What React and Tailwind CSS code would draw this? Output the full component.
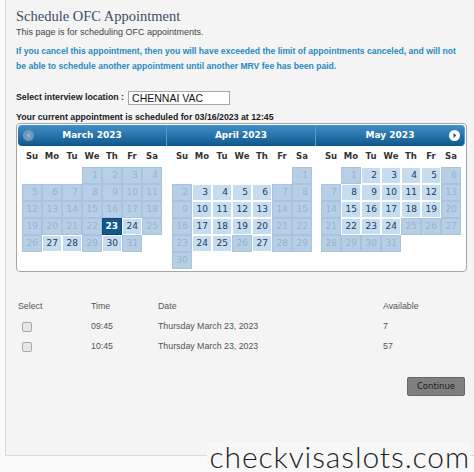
import React from 'react';

const months = [
  { name: 'March 2023', offset: 3, days: 31, open: [24, 27, 28, 30], picked: 23 },
  { name: 'April 2023', offset: 6, days: 30, open: [3, 4, 5, 6, 10, 11, 12, 13, 17, 18, 19, 20, 24, 25, 27] },
  { name: 'May 2023', offset: 1, days: 31, open: [2, 3, 4, 5, 8, 9, 10, 11, 12, 15, 16, 17, 18, 19, 22, 23, 24] },
];

const weekDays = ['Su', 'Mo', 'Tu', 'We', 'Th', 'Fr', 'Sa'];

const slots = [
  { time: '09:45', date: 'Thursday March 23, 2023', available: '7' },
  { time: '10:45', date: 'Thursday March 23, 2023', available: '57' },
];

function NavIcon({ dir }) {
  if (dir === 'prev') {
    return (
      <svg width="11" height="11" viewBox="0 0 11 11">
        <circle cx="5.5" cy="5.5" r="5.5" fill="#6f98bd" />
        <path d="M6.5 3 L3.8 5.5 L6.5 8 Z" fill="#9dbbd5" />
      </svg>
    );
  }
  return (
    <svg width="11" height="11" viewBox="0 0 11 11">
      <circle cx="5.5" cy="5.5" r="5.5" fill="#ffffff" />
      <path d="M4.5 3 L7.2 5.5 L4.5 8 Z" fill="#16527f" />
    </svg>
  );
}

function DayCell({ day, month }) {
  if (!day) return <div />;
  if (day === month.picked) {
    return (
      <div className="border border-[#0b4676] bg-[#12598f] text-white font-bold text-right pr-[3px] leading-[15px]">
        {day}
      </div>
    );
  }
  if (month.open.includes(day)) {
    return (
      <div className="border border-white bg-[#c6dcf1] text-[#223c5a] text-right pr-[3px] leading-[15px]">
        {day}
      </div>
    );
  }
  return (
    <div className="border border-[#a9c3dc] bg-[#b6cfe7] text-[#9ab2c9] text-right pr-[3px] leading-[15px]">
      {day}
    </div>
  );
}

function Month({ month, index }) {
  const cells = [];
  for (let i = 0; i < month.offset; i++) cells.push(null);
  for (let d = 1; d <= month.days; d++) cells.push(d);

  const rounding = index === 0 ? 'rounded-l-[4px]' : index === 2 ? 'rounded-r-[4px]' : '';

  return (
    <div className="w-[149px]">
      <div
        className={`relative h-[21px] flex items-center justify-center bg-gradient-to-b from-[#4190ca] to-[#0c578b] border-r border-[#5b9ccc] text-white text-[9px] font-bold ${rounding}`}
      >
        {index === 0 && (
          <span className="absolute left-[5px] top-[5px] flex">
            <NavIcon dir="prev" />
          </span>
        )}
        {month.name}
        {index === 2 && (
          <span className="absolute right-[4px] top-[5px] flex">
            <NavIcon dir="next" />
          </span>
        )}
      </div>
      <div className={index === 0 ? 'pl-[4px]' : 'pl-[5px]'}>
        <div className="grid grid-cols-[repeat(7,20px)] h-[16px] mt-[2px] items-center text-[8.5px] font-bold text-[#333]">
          {weekDays.map((w) => (
            <div key={w} className="text-center">{w}</div>
          ))}
        </div>
        <div className="grid grid-cols-[repeat(7,20px)] auto-rows-[17px] mt-[3px] text-[9px]">
          {cells.map((d, i) => (
            <DayCell key={i} day={d} month={month} />
          ))}
        </div>
      </div>
    </div>
  );
}

export default function App() {
  return (
    <div className="relative w-[474px] h-[472px] overflow-hidden bg-[#fafafa]">
      <div className="ml-[5px] h-[456px] border-l border-b border-[#dadada] bg-[#f4f4f4] pl-[10px] pt-[7px] font-['Liberation_Sans',Arial,sans-serif]">
        <h1 className="font-['Liberation_Serif',Georgia,serif] text-[14.5px] leading-[18px] text-[#3b4e63]">
          Schedule OFC Appointment
        </h1>
        <p className="text-[9px] leading-[12px] text-[#444] mt-[1px]">
          This page is for scheduling OFC appointments.
        </p>
        <p className="mt-[6px] w-[450px] text-[8.6px] leading-[15px] font-bold text-[#2a8ac0]">
          If you cancel this appointment, then you will have exceeded the limit of appointments canceled, and will not be
          able to schedule another appointment until another MRV fee has been paid.
        </p>

        <div className="mt-[17px] flex items-center gap-[4px]">
          <span className="text-[8.8px] font-bold text-[#222]">Select interview location :</span>
          <div className="w-[102px] h-[14px] border border-[#a8a8a8] bg-white px-[3px] text-[10.5px] leading-[12px] text-[#111]">
            CHENNAI VAC
          </div>
        </div>
        <p className="mt-[6px] text-[8.75px] leading-[12px] font-bold text-[#222]">
          Your current appointment is scheduled for 03/16/2023 at 12:45
        </p>

        <div className="w-[451px] h-[149px] border border-[#a6a6a6] rounded-[4px] bg-white p-px font-['DejaVu_Sans',Verdana,sans-serif]">
          <div className="flex">
            {months.map((m, i) => (
              <Month key={m.name} month={m} index={i} />
            ))}
          </div>
        </div>

        <div className="mt-[25px] ml-[2px] grid grid-cols-[73px_67px_225px_auto] auto-rows-[20px] items-center text-[8.8px] text-[#555]">
          <div>Select</div>
          <div>Time</div>
          <div>Date</div>
          <div>Available</div>
          {slots.map((s) => (
            <React.Fragment key={s.time}>
              <div className="pl-[4px] flex">
                <span className="w-[10px] h-[10px] rounded-[2px] border border-[#a9a9a9] bg-[#e6e6e6]" />
              </div>
              <div>{s.time}</div>
              <div>{s.date}</div>
              <div>{s.available}</div>
            </React.Fragment>
          ))}
        </div>

        <div className="mt-[20px] flex justify-end pr-[9px]">
          <button className="w-[58px] h-[19px] rounded-[2px] border border-[#666] bg-[#7f7f7f] text-[8.5px] text-[#1c1c1c] font-['DejaVu_Sans',Verdana,sans-serif]">
            Continue
          </button>
        </div>
      </div>

      <div className="absolute right-[4px] bottom-[1px] bg-[#f7f7f7] pl-[2px] font-['Lato',sans-serif] font-light text-[30px] leading-[29px] tracking-[0.9px] text-[#1e1e1e]">
        checkvisaslots.com
      </div>
    </div>
  );
}
